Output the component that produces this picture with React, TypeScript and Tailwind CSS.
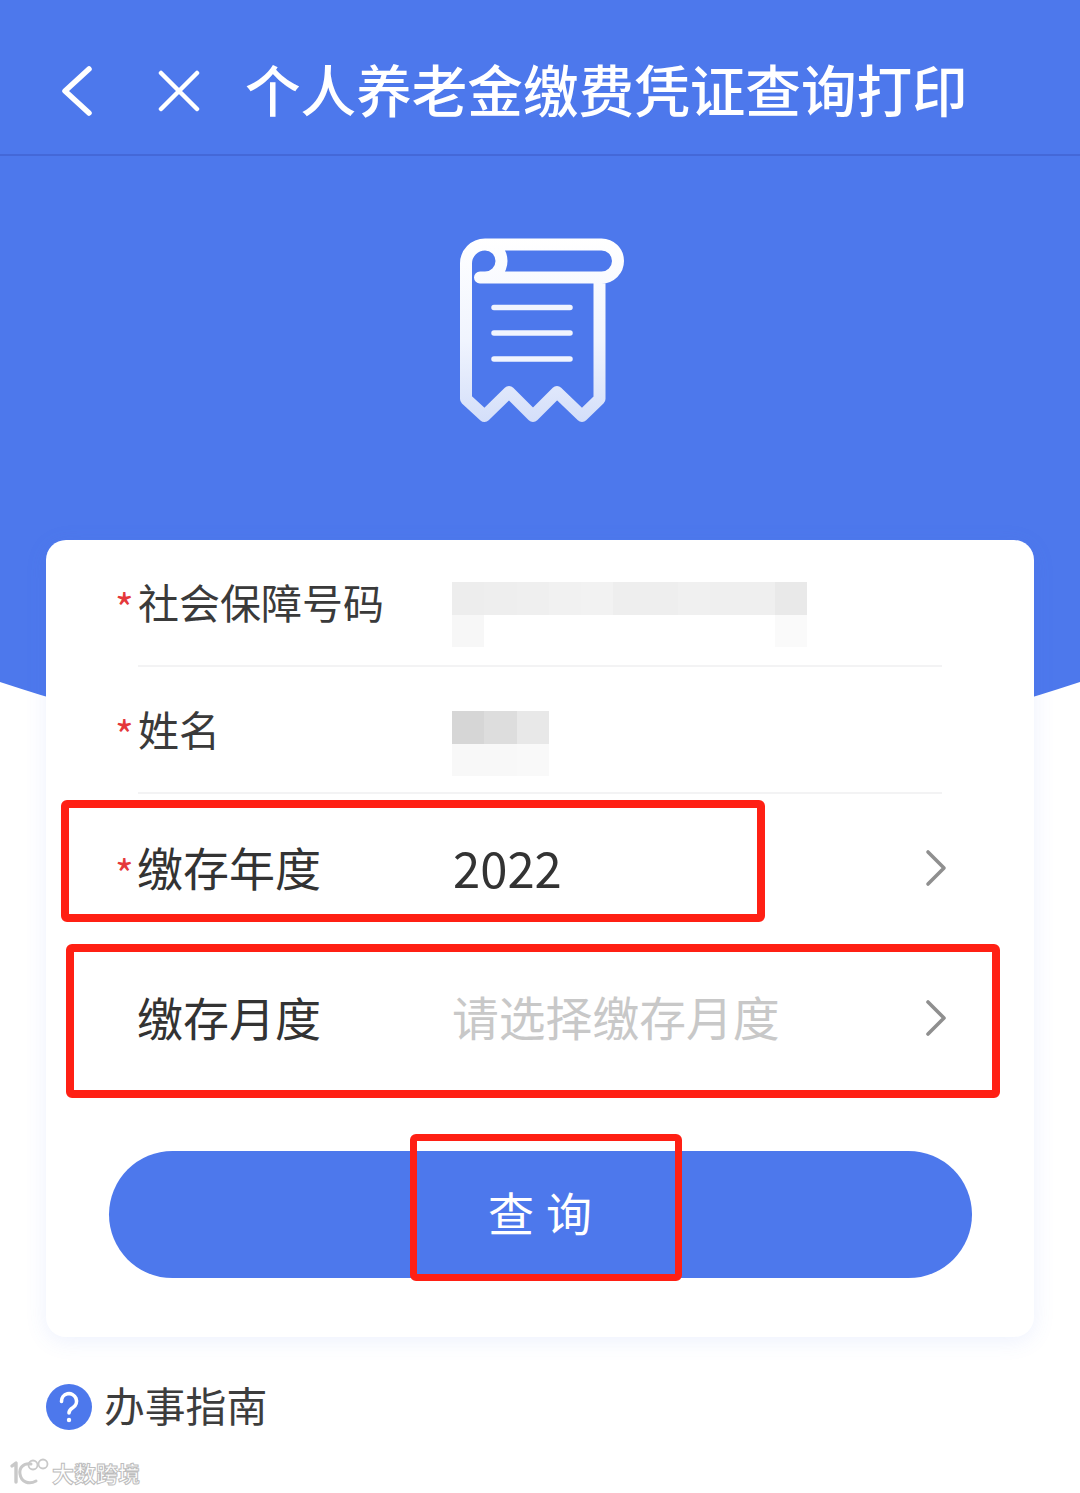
const blue = "#4d78ec";

const idBlocks = ["#ededed", "#eeeeee", "#efefef", "#f1f1f1", "#f2f2f2", "#eeeeee", "#eeeeee", "#f0f0f0", "#efefef", "#efefef", "#e9e9e9"];
const nameBlocks = ["#d6d6d6", "#dddddd", "#e8e8e8"];

function ChevronRight() {
  return (
    <svg width="24" height="38" viewBox="0 0 24 38" fill="none" className="mr-[86px] ml-auto shrink-0 -translate-y-[1px]">
      <path d="M4 3 L20 19 L4 35" stroke="#8f8f8f" strokeWidth="3.6" strokeLinecap="round" strokeLinejoin="round" />
    </svg>
  );
}

function ReceiptIcon() {
  return (
    <svg width="220" height="220" viewBox="0 0 220 220" fill="none">
      <defs>
        <linearGradient id="paper" gradientUnits="userSpaceOnUse" x1="0" y1="18" x2="0" y2="204">
          <stop offset="0" stopColor="#ffffff" />
          <stop offset="0.55" stopColor="#f0f4fe" />
          <stop offset="1" stopColor="#d3def9" />
        </linearGradient>
      </defs>
      <path
        d="M50 57.5 H55 A16.5 16.5 0 0 0 55 24.5 A19 19 0 0 0 36 44 V179 L54.5 196 L79 172 L103 196 L127 172 L152 196 L169.5 179 V57.5 M55 24.5 H171.5 A16.5 16.5 0 0 1 171.5 57.5 H55"
        stroke="url(#paper)"
        strokeWidth="12"
        strokeLinecap="round"
        strokeLinejoin="round"
      />
      <path d="M64 87.5 H140 M64 113 H140 M64 139 H140" stroke="#f0f4fe" strokeWidth="5.5" strokeLinecap="round" />
    </svg>
  );
}

function Mosaic({ blocks, under, offset }: { blocks: string[]; under: Record<number, string>; offset: string }) {
  return (
    <div className={"flex flex-col " + offset}>
      <div className="flex">
        {blocks.map((c, i) => (
          <div key={i} className="h-[33px] w-[32.3px]" style={{ background: c }} />
        ))}
      </div>
      <div className="flex">
        {blocks.map((_, i) => (
          <div key={i} className="h-[32px] w-[32.3px]" style={{ background: under[i] || "transparent" }} />
        ))}
      </div>
    </div>
  );
}

function Row({ star, label, children, size }: { star?: boolean; label: string; size: "sm" | "lg"; children?: React.ReactNode }) {
  return (
    <div className="flex h-full items-center pl-[69px]">
      <span className="w-[23px] shrink-0 pt-[8px] text-[40px] leading-none text-[#e5383b]">{star ? "*" : ""}</span>
      <span
        className={
          size === "sm"
            ? "mb-[3px] w-[314px] shrink-0 text-[41px] leading-none text-[#3a3a3a]"
            : "mb-[6px] ml-[-1px] w-[315px] shrink-0 text-[46px] leading-none text-[#333333]"
        }
      >
        {label}
      </span>
      {children}
    </div>
  );
}

export default function App() {
  return (
    <div className="relative h-[1493px] w-[1080px] overflow-hidden bg-white font-['Noto_Sans_CJK_SC','Noto_Sans',sans-serif]">
      {/* blue backdrop with the curved bottom edge */}
      <div className="absolute top-[-2671px] left-[-1180px] h-[3440px] w-[3440px] rounded-full bg-[#4d78ec]" />

      <div className="relative flex h-full flex-col">
        <header className="flex h-[156px] shrink-0 items-center border-b-2 border-[#4468d8] pt-[28px] pl-[60px]">
          <svg width="34" height="54" viewBox="0 0 34 54" fill="none" className="shrink-0">
            <path d="M29 5 L5 27 L29 49" stroke="white" strokeWidth="5.5" strokeLinecap="round" strokeLinejoin="round" />
          </svg>
          <svg width="42" height="42" viewBox="0 0 42 42" fill="none" className="ml-[64px] shrink-0">
            <path d="M3 3 L39 39 M39 3 L3 39" stroke="white" strokeWidth="4.5" strokeLinecap="round" />
          </svg>
          <h1 className="mb-[4px] ml-[45px] text-[55.6px] leading-none font-medium whitespace-nowrap text-white">个人养老金缴费凭证查询打印</h1>
        </header>

        <div className="flex h-[384px] shrink-0 justify-center pt-[64px]">
          <ReceiptIcon />
        </div>

        <main className="mx-[46px] h-[797px] shrink-0 rounded-[20px] bg-white shadow-[0_4px_22px_rgba(77,120,236,0.10)]">
          <div className="h-[125px]">
            <Row star label="社会保障号码" size="sm">
              <Mosaic blocks={idBlocks} under={{ 0: "#f7f7f7", 10: "#fafafa" }} offset="mt-[23px]" />
            </Row>
          </div>
          <div className="mx-[92px] h-[2px] bg-[#f3f3f4]" />
          <div className="h-[125px]">
            <Row star label="姓名" size="sm">
              <Mosaic blocks={nameBlocks} under={{ 0: "#f8f8f8", 1: "#f8f8f8", 2: "#f9f9f9" }} offset="mt-[27px]" />
            </Row>
          </div>
          <div className="mx-[92px] h-[2px] bg-[#f3f3f4]" />
          <div className="h-[150px]">
            <Row star label="缴存年度" size="lg">
              <span className="mb-[6px] ml-[1px] text-[49px] leading-none text-[#333333]">2022</span>
              <ChevronRight />
            </Row>
          </div>
          <div className="h-[150px]">
            <Row label="缴存月度" size="lg">
              <span className="mb-[6px] text-[46.8px] leading-none text-[#c8c8c8]">请选择缴存月度</span>
              <ChevronRight />
            </Row>
          </div>
          <button className="mx-auto mt-[57px] flex h-[127px] w-[863px] items-center justify-center gap-[12px] rounded-full bg-[#4d78ec] pb-[7px] text-[46px] leading-none text-white">
            <span>查</span>
            <span>询</span>
          </button>
        </main>

        <div className="mt-[47px] ml-[46px] flex items-center gap-[12px]">
          <svg width="46" height="46" viewBox="0 0 46 46" className="shrink-0">
            <circle cx="23" cy="23" r="23" fill={blue} />
            <path d="M15.5 17.5 A7.5 7.5 0 1 1 27 23.5 C24.5 25 23 26 23 29" fill="none" stroke="white" strokeWidth="3.6" strokeLinecap="round" />
            <circle cx="23" cy="36" r="2.2" fill="white" />
          </svg>
          <span className="mb-[4px] text-[40.8px] leading-none text-[#3d3d3d]">办事指南</span>
        </div>
      </div>

      {/* annotation boxes */}
      <div className="absolute top-[800px] left-[61px] h-[122px] w-[704px] rounded-[6px] border-[8px] border-[#ff2014]" />
      <div className="absolute top-[944px] left-[66px] h-[154px] w-[934px] rounded-[6px] border-[8px] border-[#ff2014]" />
      <div className="absolute top-[1134px] left-[410px] h-[147px] w-[272px] rounded-[6px] border-[7px] border-[#ff2014]" />

      {/* watermark */}
      <div className="absolute top-[1456px] left-[9px] flex items-center">
        <svg width="42" height="32" viewBox="0 0 42 32" fill="none">
          <path d="M3 10 L7 7 V26" stroke="#c9c9c9" strokeWidth="3.4" strokeLinecap="round" strokeLinejoin="round" />
          <path d="M22 8 C14 7 10 12 11 18 C12 26 20 29 27 25" stroke="#c9c9c9" strokeWidth="3" strokeLinecap="round" />
          <circle cx="24" cy="9" r="4.5" stroke="#c9c9c9" strokeWidth="1.8" />
          <circle cx="34" cy="8" r="4.5" stroke="#c9c9c9" strokeWidth="1.8" />
        </svg>
        <span className="ml-[1px] text-[22px] leading-none font-bold text-white [-webkit-text-stroke:1px_#bdbdbd]">大数跨境</span>
      </div>
    </div>
  );
}
